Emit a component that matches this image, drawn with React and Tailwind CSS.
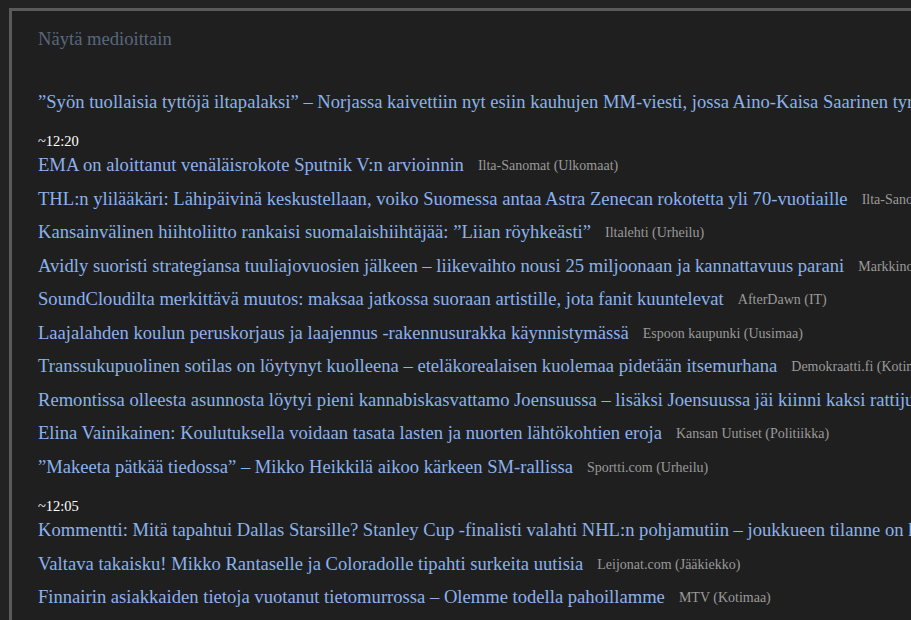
import React from 'react';

const groups = [
  {
    time: null,
    items: [
      { title: '”Syön tuollaisia tyttöjä iltapalaksi” – Norjassa kaivettiin nyt esiin kauhujen MM-viesti, jossa Aino-Kaisa Saarinen tyrmäsi kilpakumppaninsa', source: '' },
    ],
  },
  {
    time: '~12:20',
    items: [
      { title: 'EMA on aloittanut venäläisrokote Sputnik V:n arvioinnin', source: 'Ilta-Sanomat (Ulkomaat)' },
      { title: 'THL:n ylilääkäri: Lähipäivinä keskustellaan, voiko Suomessa antaa Astra Zenecan rokotetta yli 70-vuotiaille', source: 'Ilta-Sanomat (Kotimaa)' },
      { title: 'Kansainvälinen hiihtoliitto rankaisi suomalaishiihtäjää: ”Liian röyhkeästi”', source: 'Iltalehti (Urheilu)' },
      { title: 'Avidly suoristi strategiansa tuuliajovuosien jälkeen – liikevaihto nousi 25 miljoonaan ja kannattavuus parani', source: 'Markkinointi & Mainonta' },
      { title: 'SoundCloudilta merkittävä muutos: maksaa jatkossa suoraan artistille, jota fanit kuuntelevat', source: 'AfterDawn (IT)' },
      { title: 'Laajalahden koulun peruskorjaus ja laajennus -rakennusurakka käynnistymässä', source: 'Espoon kaupunki (Uusimaa)' },
      { title: 'Transsukupuolinen sotilas on löytynyt kuolleena – eteläkorealaisen kuolemaa pidetään itsemurhana', source: 'Demokraatti.fi (Kotimaa)' },
      { title: 'Remontissa olleesta asunnosta löytyi pieni kannabiskasvattamo Joensuussa – lisäksi Joensuussa jäi kiinni kaksi rattijuoppoa', source: 'Karjalainen' },
      { title: 'Elina Vainikainen: Koulutuksella voidaan tasata lasten ja nuorten lähtökohtien eroja', source: 'Kansan Uutiset (Politiikka)' },
      { title: '”Makeeta pätkää tiedossa” – Mikko Heikkilä aikoo kärkeen SM-rallissa', source: 'Sportti.com (Urheilu)' },
    ],
  },
  {
    time: '~12:05',
    items: [
      { title: 'Kommentti: Mitä tapahtui Dallas Starsille? Stanley Cup -finalisti valahti NHL:n pohjamutiin – joukkueen tilanne on huolestuttava', source: 'Ilta-Sanomat (Urheilu)' },
      { title: 'Valtava takaisku! Mikko Rantaselle ja Coloradolle tipahti surkeita uutisia', source: 'Leijonat.com (Jääkiekko)' },
      { title: 'Finnairin asiakkaiden tietoja vuotanut tietomurrossa – Olemme todella pahoillamme', source: 'MTV (Kotimaa)' },
    ],
  },
];

export default function App() {
  return (
    <div className="w-[911px] h-[620px] overflow-hidden bg-[#222222] pt-2 pl-[9px]" style={{ fontFamily: '"Liberation Serif", "Times New Roman", serif' }}>
      <div className="w-[1500px] h-[700px] border-[3px] border-[#5a5a5a] bg-[#1f1f1f] pl-[26px] pt-4">
        <div className="text-[18.6px] leading-6 text-[#58677d]">Näytä medioittain</div>

        <div className="mt-[34px]">
          {groups.map((g, gi) => (
            <div key={gi} className={gi === 0 ? '' : 'mt-[14px]'}>
              {g.time && <div className="mt-[2px] text-[14.5px] leading-4 text-white">{g.time}</div>}
              {g.items.map((it, i) => (
                <div key={i} className="flex h-[33.5px] items-center gap-[14px] whitespace-nowrap">
                  <a className="text-[18.6px] leading-6 text-[#8ab2ec]">{it.title}</a>
                  {it.source && <span className="mt-[2px] text-[14px] leading-5 text-[#9a9a9a]">{it.source}</span>}
                </div>
              ))}
            </div>
          ))}
        </div>
      </div>
    </div>
  );
}
